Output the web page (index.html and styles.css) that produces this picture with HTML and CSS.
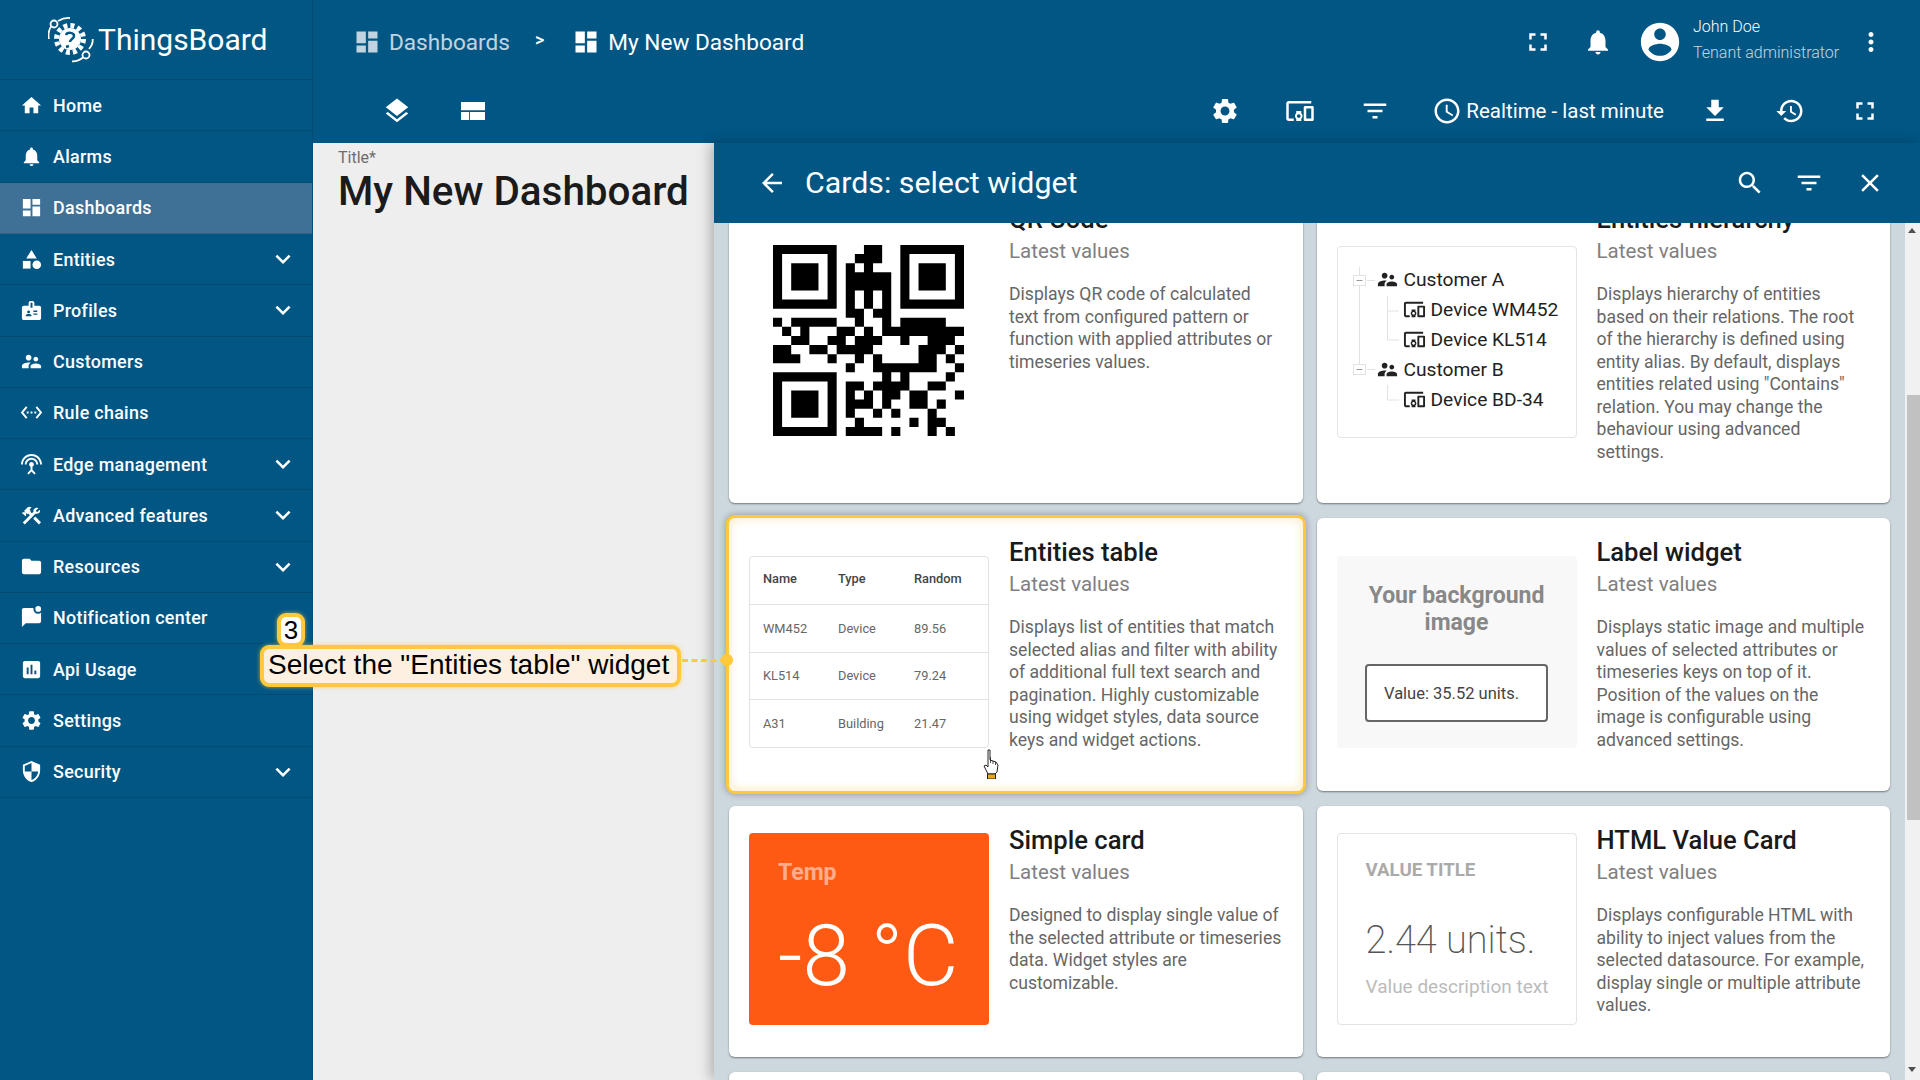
FILE: index.html
```html
<!DOCTYPE html>
<html>
<head>
  <title>ThingsBoard - My New Dashboard</title>
  <meta name="viewport" content="width=device-width, initial-scale=1.0">
  <link rel="stylesheet" href="styles.css">
</head>
<body>
  <svg class="defs" width="0" height="0">
    <symbol id="i-home" viewBox="0 0 24 24"><path d="M10 20v-6h4v6h5v-8h3L12 3 2 12h3v8z"/></symbol>
    <symbol id="i-bell" viewBox="0 0 24 24"><path d="M12 22c1.1 0 2-.9 2-2h-4c0 1.1.89 2 2 2zm6-6v-5c0-3.07-1.64-5.64-4.5-6.32V4c0-.83-.67-1.5-1.5-1.5s-1.5.67-1.5 1.5v.68C7.63 5.36 6 7.92 6 11v5l-2 2v1h16v-1l-2-2z"/></symbol>
    <symbol id="i-dash" viewBox="0 0 24 24"><path d="M3 13h8V3H3v10zm0 8h8v-6H3v6zm10 0h8V11h-8v10zm0-18v6h8V3h-8z"/></symbol>
    <symbol id="i-category" viewBox="0 0 24 24"><path d="M12 2l-5.5 9h11z"/><circle cx="17.5" cy="17.5" r="4.5"/><path d="M3 13.5h8v8H3z"/></symbol>
    <symbol id="i-badge" viewBox="0 0 24 24"><path d="M20 7h-5V4c0-1.1-.9-2-2-2h-2c-1.1 0-2 .9-2 2v3H4c-1.1 0-2 .9-2 2v11c0 1.1.9 2 2 2h16c1.1 0 2-.9 2-2V9c0-1.1-.9-2-2-2zM9 12c.83 0 1.5.67 1.5 1.5S9.83 15 9 15s-1.5-.67-1.5-1.5S8.17 12 9 12zm3 6H6v-.75c0-1 2-1.5 3-1.5s3 .5 3 1.5V18zm1-9h-2V4h2v5zm5 7.5h-4V15h4v1.5zm0-3h-4V12h4v1.5z"/></symbol>
    <symbol id="i-people" viewBox="0 0 24 24"><path d="M16.5 12c1.38 0 2.49-1.12 2.49-2.5S17.88 7 16.5 7C15.12 7 14 8.12 14 9.5s1.12 2.5 2.5 2.5zM9 11c1.66 0 2.99-1.34 2.99-3S10.66 5 9 5C7.34 5 6 6.34 6 8s1.34 3 3 3zm7.5 3c-1.83 0-5.5.92-5.5 2.75V19h11v-2.25c0-1.83-3.67-2.75-5.5-2.75zM9 13c-2.33 0-7 1.17-7 3.5V19h7v-2.25c0-.85.33-2.34 2.37-3.47C10.5 13.1 9.66 13 9 13z"/></symbol>
    <symbol id="i-rule" viewBox="0 0 24 24"><path d="M7.77 6.76L6.23 5.48.82 12l5.41 6.52 1.54-1.28L3.42 12l4.35-5.24zM7 13h2v-2H7v2zm10-2h-2v2h2v-2zm-6 2h2v-2h-2v2zm6.77-7.52l-1.54 1.28L20.58 12l-4.35 5.24 1.54 1.28L23.18 12l-5.41-6.52z"/></symbol>
    <symbol id="i-edge" viewBox="0 0 24 24"><path d="M12 5c-3.87 0-7 3.13-7 7h2c0-2.76 2.24-5 5-5s5 2.24 5 5h2c0-3.87-3.13-7-7-7zm1 9.29c.88-.39 1.5-1.26 1.5-2.29 0-1.38-1.12-2.5-2.5-2.5S9.5 10.62 9.5 12c0 1.02.62 1.9 1.5 2.29v3.3L7.59 21 9 22.41l3-3 3 3L16.41 21 13 17.59v-3.3zM12 1C5.93 1 1 5.93 1 12h2c0-4.97 4.03-9 9-9s9 4.03 9 9h2c0-6.07-4.93-11-11-11z"/></symbol>
    <symbol id="i-tools" viewBox="0 0 24 24"><path d="M13.8 15.3l6 6 2.1-2.2-6-6z"/><path d="M17.5 10.1c-.4 0-.8-.05-1.13-.18L5 21.3l-2.1-2.1 7.4-7.4-1.8-1.8-.7.7-1.45-1.4v2.86l-.7.7-3.55-3.5.7-.7h2.8L4.2 7.25 7.8 3.7c1.17-1.17 3.07-1.17 4.24 0L9.9 5.8l1.4 1.4-.7.7 1.8 1.8 1.8-1.9c-.13-.32-.2-.74-.2-1.12C14 5.75 15.75 4 17.5 4c.6 0 1.1.14 1.6.4l-2.7 2.7 1.5 1.5 2.7-2.7c.27.47.4 1 .4 1.6 0 1.75-1.75 2.6-3.5 2.6z"/></symbol>
    <symbol id="i-folder" viewBox="0 0 24 24"><path d="M10 4H4c-1.1 0-1.99.9-1.99 2L2 18c0 1.1.9 2 2 2h16c1.1 0 2-.9 2-2V8c0-1.1-.9-2-2-2h-8l-2-2z"/></symbol>
    <symbol id="i-chat" viewBox="0 0 24 24"><path d="M22 6.98V16c0 1.1-.9 2-2 2H6l-4 4V4c0-1.1.9-2 2-2h10.1c-.06.32-.1.66-.1 1 0 2.76 2.24 5 5 5 1.13 0 2.16-.39 3-1.02z"/><circle cx="19" cy="3" r="3"/></symbol>
    <symbol id="i-chart" viewBox="0 0 24 24"><path d="M19 3H5c-1.1 0-2 .9-2 2v14c0 1.1.9 2 2 2h14c1.1 0 2-.9 2-2V5c0-1.1-.9-2-2-2zM9 17H7v-7h2v7zm4 0h-2V7h2v10zm4 0h-2v-4h2v4z"/></symbol>
    <symbol id="i-gear" viewBox="0 0 24 24"><path d="M19.14 12.94c.04-.3.06-.61.06-.94 0-.32-.02-.64-.07-.94l2.03-1.58c.18-.14.23-.41.12-.61l-1.92-3.32c-.12-.22-.37-.29-.59-.22l-2.39.96c-.5-.38-1.03-.7-1.62-.94l-.36-2.54c-.04-.24-.24-.41-.48-.41h-3.84c-.24 0-.43.17-.47.41l-.36 2.54c-.59.24-1.13.57-1.62.94l-2.39-.96c-.22-.08-.47 0-.59.22L2.74 8.87c-.12.21-.08.47.12.61l2.03 1.58c-.05.3-.09.63-.09.94s.02.64.07.94l-2.03 1.58c-.18.14-.23.41-.12.61l1.92 3.32c.12.22.37.29.59.22l2.39-.96c.5.38 1.03.7 1.62.94l.36 2.54c.05.24.24.41.48.41h3.84c.24 0 .44-.17.47-.41l.36-2.54c.59-.24 1.13-.56 1.62-.94l2.39.96c.22.08.47 0 .59-.22l1.92-3.32c.12-.22.07-.47-.12-.61l-2.01-1.58zM12 15.6c-1.98 0-3.6-1.62-3.6-3.6s1.62-3.6 3.6-3.6 3.6 1.62 3.6 3.6-1.62 3.6-3.6 3.6z"/></symbol>
    <symbol id="i-shield" viewBox="0 0 24 24"><path d="M12 1L3 5v6c0 5.55 3.84 10.74 9 12 5.16-1.26 9-6.45 9-12V5l-9-4zm0 10.99h7c-.53 4.12-3.28 7.79-7 8.94V12H5V6.3l7-3.11v8.8z"/></symbol>
    <symbol id="i-more" viewBox="0 0 24 24"><path d="M16.59 8.59L12 13.17 7.41 8.59 6 10l6 6 6-6z"/></symbol>
    <symbol id="i-full" viewBox="0 0 24 24"><path d="M7 14H5v5h5v-2H7v-3zm-2-4h2V7h3V5H5v5zm12 7h-3v2h5v-5h-2v3zM14 5v2h3v3h2V5h-5z"/></symbol>
    <symbol id="i-account" viewBox="0 0 24 24"><path d="M12 2C6.48 2 2 6.48 2 12s4.48 10 10 10 10-4.48 10-10S17.52 2 12 2zm0 3c1.66 0 3 1.34 3 3s-1.34 3-3 3-3-1.34-3-3 1.34-3 3-3zm0 14.2c-2.5 0-4.71-1.28-6-3.22.03-1.99 4-3.08 6-3.08 1.99 0 5.97 1.09 6 3.08-1.29 1.94-3.5 3.22-6 3.22z"/></symbol>
    <symbol id="i-vert" viewBox="0 0 24 24"><path d="M12 8c1.1 0 2-.9 2-2s-.9-2-2-2-2 .9-2 2 .9 2 2 2zm0 2c-1.1 0-2 .9-2 2s.9 2 2 2 2-.9 2-2-.9-2-2-2zm0 6c-1.1 0-2 .9-2 2s.9 2 2 2 2-.9 2-2-.9-2-2-2z"/></symbol>
    <symbol id="i-layers" viewBox="0 0 24 24"><path d="M11.99 18.54l-7.37-5.73L3 14.07l9 7 9-7-1.63-1.27-7.38 5.74zM12 16l7.36-5.73L21 9l-9-7-9 7 1.63 1.27L12 16z"/></symbol>
    <symbol id="i-layout" viewBox="0 0 24 24"><path d="M2.4 4.8h19.2v6.6H2.4zM2.4 12.8h6.4v6.4H2.4zM9.5 12.8h12.1v6.4H9.5z"/></symbol>
    <symbol id="i-devices" viewBox="0 0 24 24"><path d="M3 6h18V4H3c-1.1 0-2 .9-2 2v12c0 1.1.9 2 2 2h4v-2H3V6zm10 6H9v1.78c-.61.55-1 1.33-1 2.22s.39 1.67 1 2.22V20h4v-1.78c.61-.55 1-1.34 1-2.22s-.39-1.67-1-2.22V12zm-2 5.5c-.83 0-1.5-.67-1.5-1.5s.67-1.5 1.5-1.5 1.5.67 1.5 1.5-.67 1.5-1.5 1.5zM22 8h-6c-.5 0-1 .5-1 1v10c0 .5.5 1 1 1h6c.5 0 1-.5 1-1V9c0-.5-.5-1-1-1zm-1 10h-4v-8h4v8z"/></symbol>
    <symbol id="i-filter" viewBox="0 0 24 24"><path d="M10 18h4v-2h-4v2zM3 6v2h18V6H3zm3 7h12v-2H6v2z"/></symbol>
    <symbol id="i-clock" viewBox="0 0 24 24"><path d="M11.99 2C6.47 2 2 6.48 2 12s4.47 10 9.99 10C17.52 22 22 17.52 22 12S17.52 2 11.99 2zM12 20c-4.42 0-8-3.58-8-8s3.58-8 8-8 8 3.58 8 8-3.58 8-8 8zm.5-13H11v6l5.25 3.15.75-1.23-4.5-2.67z"/></symbol>
    <symbol id="i-download" viewBox="0 0 24 24"><path d="M19 9h-4V3H9v6H5l7 7 7-7zM5 18v2h14v-2H5z"/></symbol>
    <symbol id="i-history" viewBox="0 0 24 24"><path d="M13 3c-4.97 0-9 4.03-9 9H1l3.89 3.89.07.14L9 12H6c0-3.87 3.13-7 7-7s7 3.13 7 7-3.13 7-7 7c-1.93 0-3.68-.79-4.94-2.06l-1.42 1.42C8.27 19.99 10.51 21 13 21c4.97 0 9-4.03 9-9s-4.03-9-9-9zm-1 5v5l4.28 2.54.72-1.21-3.5-2.08V8H12z"/></symbol>
    <symbol id="i-back" viewBox="0 0 24 24"><path d="M20 11H7.83l5.59-5.59L12 4l-8 8 8 8 1.41-1.41L7.83 13H20v-2z"/></symbol>
    <symbol id="i-search" viewBox="0 0 24 24"><path d="M15.5 14h-.79l-.28-.27C15.41 12.59 16 11.11 16 9.5 16 5.91 13.09 3 9.5 3S3 5.91 3 9.5 5.91 16 9.5 16c1.61 0 3.09-.59 4.23-1.57l.27.28v.79l5 4.99L20.49 19l-4.99-5zm-6 0C7.01 14 5 11.99 5 9.5S7.01 5 9.5 5 14 7.01 14 9.5 11.99 14 9.5 14z"/></symbol>
    <symbol id="i-close" viewBox="0 0 24 24"><path d="M19 6.41L17.59 5 12 10.59 6.41 5 5 6.41 10.59 12 5 17.59 6.41 19 12 13.41 17.59 19 19 17.59 13.41 12z"/></symbol>
  </svg>

  <aside class="sidebar">
    <div class="logo">
      <svg class="logo-mark" viewBox="0 0 46 46" width="46" height="46">
        <circle cx="22" cy="22" r="11" fill="#fff"/>
        <circle cx="22" cy="22" r="13.5" fill="none" stroke="#fff" stroke-width="5" stroke-dasharray="4 3.07"/>
        <path d="M18 18c1-3 8-3 8 1 0 3-4 3-4 6M21 29l-3 1" fill="none" stroke="#015684" stroke-width="2.5"/>
        <path d="M.8 22C0 16 1 12 3.5 9M10 4C14 1.5 18 .8 22 1M44.7 22c.3 4-1 7-3.7 10M35 40.5C32 43 28 44.5 24 44.3" fill="none" stroke="#fff" stroke-width="1.8"/>
        <circle cx="6" cy="7" r="3.5" fill="#015684" stroke="#fff" stroke-width="1.8"/>
        <circle cx="38" cy="38" r="3.5" fill="#015684" stroke="#fff" stroke-width="1.8"/>
      </svg>
      <span class="logo-text">ThingsBoard</span>
    </div>
    <nav>
      <a class="nav-item"><svg class="ic"><use href="#i-home"/></svg><span>Home</span></a>
      <a class="nav-item"><svg class="ic"><use href="#i-bell"/></svg><span>Alarms</span></a>
      <a class="nav-item active"><svg class="ic"><use href="#i-dash"/></svg><span>Dashboards</span></a>
      <a class="nav-item"><svg class="ic"><use href="#i-category"/></svg><span>Entities</span><svg class="chev"><use href="#i-more"/></svg></a>
      <a class="nav-item"><svg class="ic"><use href="#i-badge"/></svg><span>Profiles</span><svg class="chev"><use href="#i-more"/></svg></a>
      <a class="nav-item"><svg class="ic"><use href="#i-people"/></svg><span>Customers</span></a>
      <a class="nav-item"><svg class="ic"><use href="#i-rule"/></svg><span>Rule chains</span></a>
      <a class="nav-item"><svg class="ic"><use href="#i-edge"/></svg><span>Edge management</span><svg class="chev"><use href="#i-more"/></svg></a>
      <a class="nav-item"><svg class="ic"><use href="#i-tools"/></svg><span>Advanced features</span><svg class="chev"><use href="#i-more"/></svg></a>
      <a class="nav-item"><svg class="ic"><use href="#i-folder"/></svg><span>Resources</span><svg class="chev"><use href="#i-more"/></svg></a>
      <a class="nav-item"><svg class="ic"><use href="#i-chat"/></svg><span>Notification center</span></a>
      <a class="nav-item"><svg class="ic"><use href="#i-chart"/></svg><span>Api Usage</span></a>
      <a class="nav-item"><svg class="ic"><use href="#i-gear"/></svg><span>Settings</span></a>
      <a class="nav-item"><svg class="ic"><use href="#i-shield"/></svg><span>Security</span><svg class="chev"><use href="#i-more"/></svg></a>
    </nav>
  </aside>

  <main class="main">
    <header class="topbar">
      <div class="crumbs">
        <svg class="crumb-ic dim"><use href="#i-dash"/></svg>
        <span class="crumb dim">Dashboards</span>
        <span class="crumb-sep">&gt;</span>
        <svg class="crumb-ic"><use href="#i-dash"/></svg>
        <span class="crumb">My New Dashboard</span>
        <div class="spacer"></div>
        <svg class="tb-ic full-top"><use href="#i-full"/></svg>
        <svg class="tb-ic bell-top"><use href="#i-bell"/></svg>
        <svg class="avatar"><use href="#i-account"/></svg>
        <div class="user">
          <div class="user-name">John Doe</div>
          <div class="user-role">Tenant administrator</div>
        </div>
        <svg class="tb-ic kebab"><use href="#i-vert"/></svg>
      </div>
      <div class="toolbar">
        <svg class="tb-ic layers"><use href="#i-layers"/></svg>
        <svg class="tb-ic layout"><use href="#i-layout"/></svg>
        <div class="spacer"></div>
        <svg class="tb-ic"><use href="#i-gear"/></svg>
        <svg class="tb-ic"><use href="#i-devices"/></svg>
        <svg class="tb-ic"><use href="#i-filter"/></svg>
        <div class="timewindow"><svg class="tb-ic"><use href="#i-clock"/></svg><span>Realtime - last minute</span></div>
        <svg class="tb-ic"><use href="#i-download"/></svg>
        <svg class="tb-ic"><use href="#i-history"/></svg>
        <svg class="tb-ic"><use href="#i-full"/></svg>
      </div>
    </header>

    <div class="content">
      <section class="dash">
        <div class="dash-label">Title*</div>
        <div class="dash-title">My New Dashboard</div>
      </section>

      <section class="panel">
        <div class="panel-head">
          <svg class="tb-ic"><use href="#i-back"/></svg>
          <span class="panel-title">Cards: select widget</span>
          <div class="spacer"></div>
          <svg class="tb-ic"><use href="#i-search"/></svg>
          <svg class="tb-ic"><use href="#i-filter"/></svg>
          <svg class="tb-ic"><use href="#i-close"/></svg>
        </div>
        <div class="panel-body">
          <div class="scroller">
            <div class="cards">

              <article class="card">
                <div class="thumb thumb-qr">
                  <svg viewBox="0 0 21 21" width="191" height="191"><path d="M0 0h7v7H0zM1 1v5h5V1zM2 2h3v3H2zM14 0h7v7h-7zM15 1v5h5V1zM16 2h3v3h-3zM0 14h7v7H0zM1 15v5h5v-5zM2 16h3v3H2z" fill-rule="evenodd"/><path d="M10 0h2v1h-2zM9 1h3v1H9zM8 2h1v1H8zM10 2h1v1h-1zM8 3h5v2H8zM8 5h1v2H8zM10 5h1v2h-1zM12 5h1v2h-1zM8 7h2v1H8zM11 7h2v1h-2zM0 8h1v1H0zM2 8h5v1H2zM9 8h1v1H9zM12 8h1v1h-1zM14 8h5v1h-5zM1 9h1v1H1zM3 9h1v1H3zM7 9h2v1H7zM10 9h1v1h-1zM12 9h9v1h-9zM2 10h2v1H2zM6 10h2v1H6zM9 10h3v1H9zM14 10h1v1h-1zM17 10h3v1h-3zM0 11h2v1H0zM4 11h2v1H4zM7 11h4v1H7zM16 11h3v1h-3zM20 11h1v1h-1zM0 12h3v1H0zM6 12h1v1H6zM9 12h1v1H9zM11 12h1v1h-1zM16 12h2v1h-2zM19 12h1v1h-1zM8 13h1v1H8zM11 13h7v1h-7zM20 13h1v1h-1zM12 14h1v1h-1zM14 14h1v1h-1zM19 14h1v1h-1zM8 15h2v1H8zM11 15h4v1h-4zM17 15h2v1h-2zM8 16h1v1H8zM10 16h1v1h-1zM12 16h2v1h-2zM15 16h2v1h-2zM20 16h1v1h-1zM8 17h3v1H8zM12 17h1v1h-1zM15 17h2v1h-2zM18 17h1v1h-1zM8 18h1v1H8zM11 18h1v1h-1zM13 18h1v1h-1zM17 18h1v1h-1zM9 19h1v1H9zM15 19h1v1h-1zM17 19h2v1h-2zM8 20h4v1H8zM13 20h1v1h-1zM17 20h1v1h-1zM19 20h1v1h-1z"/></svg>
                </div>
                <div class="info">
                  <h3>QR Code</h3>
                  <div class="kind">Latest values</div>
                  <p>Displays QR code of calculated text from configured pattern or function with applied attributes or timeseries values.</p>
                </div>
              </article>

              <article class="card">
                <div class="thumb thumb-tree">
                  <svg class="tree-lines" width="238" height="190" stroke="#e2e2e2">
                    <path d="M21.5 20V123M37 33.5H29M37 122.5H29M49.5 49V64H61M49.5 64V93H61M49.5 138V153H61"/>
                    <rect x="15.5" y="28.5" width="12" height="10" fill="#fff"/>
                    <rect x="15.5" y="117.5" width="12" height="10" fill="#fff"/>
                    <path d="M18.5 33.5h6M18.5 122.5h6" stroke="#999"/>
                  </svg>
                  <div class="tree-row tree-root"><svg class="tree-ic"><use href="#i-people"/></svg>Customer A</div>
                  <div class="tree-row tree-leaf"><svg class="tree-ic"><use href="#i-devices"/></svg>Device WM452</div>
                  <div class="tree-row tree-leaf"><svg class="tree-ic"><use href="#i-devices"/></svg>Device KL514</div>
                  <div class="tree-row tree-root"><svg class="tree-ic"><use href="#i-people"/></svg>Customer B</div>
                  <div class="tree-row tree-leaf"><svg class="tree-ic"><use href="#i-devices"/></svg>Device BD-34</div>
                </div>
                <div class="info">
                  <h3>Entities hierarchy</h3>
                  <div class="kind">Latest values</div>
                  <p>Displays hierarchy of entities based on their relations. The root of the hierarchy is defined using entity alias. By default, displays entities related using "Contains" relation. You may change the behaviour using advanced settings.</p>
                </div>
              </article>

              <article class="card selected">
                <div class="thumb thumb-table">
                  <div class="t-row t-head"><span>Name</span><span>Type</span><span>Random</span></div>
                  <div class="t-row"><span>WM452</span><span>Device</span><span>89.56</span></div>
                  <div class="t-row"><span>KL514</span><span>Device</span><span>79.24</span></div>
                  <div class="t-row"><span>A31</span><span>Building</span><span>21.47</span></div>
                </div>
                <div class="info">
                  <h3>Entities table</h3>
                  <div class="kind">Latest values</div>
                  <p>Displays list of entities that match selected alias and filter with ability of additional full text search and pagination. Highly customizable using widget styles, data source keys and widget actions.</p>
                </div>
              </article>

              <article class="card">
                <div class="thumb thumb-label">
                  <div class="label-bg">Your background image</div>
                  <div class="label-val">Value: 35.52 units.</div>
                </div>
                <div class="info">
                  <h3>Label widget</h3>
                  <div class="kind">Latest values</div>
                  <p>Displays static image and multiple values of selected attributes or timeseries keys on top of it. Position of the values on the image is configurable using advanced settings.</p>
                </div>
              </article>

              <article class="card">
                <div class="thumb thumb-simple">
                  <div class="simple-name">Temp</div>
                  <div class="simple-val">-8 °C</div>
                </div>
                <div class="info">
                  <h3>Simple card</h3>
                  <div class="kind">Latest values</div>
                  <p>Designed to display single value of the selected attribute or timeseries data. Widget styles are customizable.</p>
                </div>
              </article>

              <article class="card">
                <div class="thumb thumb-html">
                  <div class="html-title">VALUE TITLE</div>
                  <div class="html-val">2.44 units.</div>
                  <div class="html-desc">Value description text</div>
                </div>
                <div class="info">
                  <h3>HTML Value Card</h3>
                  <div class="kind">Latest values</div>
                  <p>Displays configurable HTML with ability to inject values from the selected datasource. For example, display single or multiple attribute values.</p>
                </div>
              </article>

              <article class="card stub"></article>
              <article class="card stub"></article>
            </div>
          </div>
          <div class="scrollbar">
            <div class="sb-up"></div>
            <div class="sb-thumb"></div>
            <div class="sb-down"></div>
          </div>
        </div>
      </section>
    </div>
  </main>

  <!-- tutorial callout, sits over the page -->
  <div class="step-num">3</div>
  <div class="step-text">Select the "Entities table" widget</div>
  <div class="step-dash"></div>
  <div class="step-dot"></div>
  <svg class="cursor" viewBox="0 0 16 30" width="18" height="30">
    <path d="M5 1h2v10l6 2 2 3-1 7-2 2H5l-4-8 2-1 2 2z" fill="#fff" stroke="#222" stroke-width="1"/>
    <path d="M7.5 8v6M10 12v3M12.5 13v3" stroke="#222" stroke-width=".8"/>
    <rect x="4.5" y="25" width="8" height="5" fill="#e9a90f" stroke="#222"/>
  </svg>
</body>
</html>
```
FILE: styles.css
```css
* {
  box-sizing: border-box;
}

html, body {
  margin: 0;
  height: 1080px;
  overflow: hidden;
}

body {
  display: flex;
  position: relative;
  font-family: Roboto, "Liberation Sans", sans-serif;
  background-color: #015684;
  color: #fff;
}

.defs {
  position: absolute;
}

svg {
  fill: currentColor;
  flex: none;
}

.spacer {
  flex: 1;
}

/* sidebar */
.sidebar {
  width: 313px;
  flex: none;
  border-right: 1px solid rgba(0, 0, 0, 0.1);
}

.logo {
  height: 80.2px;
  padding-left: 48px;
  display: flex;
  align-items: center;
  gap: 4px;
  border-bottom: 1px solid rgba(0, 0, 0, 0.12);
}

.logo-text {
  font-size: 30px;
  line-height: 1;
}

.nav-item {
  height: 51.28px;
  padding: 0 14px 0 20px;
  display: flex;
  align-items: center;
  font-size: 17.9px;
  font-weight: 500;
  letter-spacing: 0.3px;
  border-bottom: 1px solid rgba(0, 0, 0, 0.12);
}

.nav-item.active {
  background-color: #3f7096;
}

.nav-item span {
  flex: 1;
  margin-left: 10px;
}

.ic {
  width: 23px;
  height: 23px;
}

.chev {
  width: 30px;
  height: 30px;
}

/* top bars */
.main {
  flex: 1;
  min-width: 0;
  display: flex;
  flex-direction: column;
}

.topbar {
  height: 143px;
  flex: none;
}

.crumbs {
  height: 84px;
  padding: 0 34px 0 40px;
  display: flex;
  align-items: center;
}

.crumb-ic {
  width: 28px;
  height: 28px;
  margin-right: 8px;
}

.crumb {
  font-size: 22.6px;
}

.dim {
  opacity: 0.75;
}

.crumb-sep {
  margin: -6px 28px 0 25px;
  font-size: 18px;
  font-weight: 500;
}

.tb-ic {
  width: 30px;
  height: 30px;
}

.full-top {
  margin-right: 30px;
}

.avatar {
  width: 46px;
  height: 46px;
  margin-left: 24px;
}

.user {
  width: 163px;
  margin: -4px 0 0 10px;
  font-size: 16px;
  font-weight: 300;
}

.user-name {
  line-height: 24px;
  margin-bottom: 2px;
}

.user-role {
  line-height: 24px;
  opacity: 0.75;
}

.toolbar {
  height: 60px;
  padding: 0 40px 0 69px;
  display: flex;
  align-items: center;
  gap: 45px;
  margin-top: -3px;
}

.layers {
  margin-right: 1px;
}

.timewindow {
  display: flex;
  align-items: center;
  gap: 4px;
  font-size: 20.5px;
  margin: 0 -9px 0 -3px;
}

/* left dashboard area */
.content {
  flex: 1;
  min-height: 0;
  display: flex;
}

.dash {
  width: 401px;
  flex: none;
  padding: 6px 0 0 25px;
  background-color: #eeeeee;
}

.dash-label {
  font-size: 16px;
  line-height: 17px;
  color: #6d6d6d;
}

.dash-title {
  font-size: 40.4px;
  font-weight: 500;
  line-height: 51px;
  color: #1b1b1b;
}

/* right panel */
.panel {
  flex: 1;
  min-width: 0;
  display: flex;
  flex-direction: column;
  box-shadow: -4px 0 12px rgba(0, 0, 0, 0.25);
}

.panel-head {
  height: 80px;
  flex: none;
  padding: 0 35px 0 43px;
  display: flex;
  align-items: center;
  gap: 31px;
}

.panel-title {
  font-size: 30.3px;
  margin: 0 0 2px -13px;
}

.panel-title + .spacer + .tb-ic {
  margin-right: -2px;
}

.panel-body {
  flex: 1;
  min-height: 0;
  display: flex;
  background-color: #cdd8de;
}

.scroller {
  flex: 1;
  min-width: 0;
  overflow: hidden;
}

.cards {
  margin-top: -38px;
  padding: 0 15px;
  display: grid;
  grid-template-columns: 1fr 1fr;
  gap: 15px 14px;
}

.scrollbar {
  width: 15px;
  flex: none;
  background-color: #f1f1f1;
  display: flex;
  flex-direction: column;
  align-items: flex-end;
}

.sb-up,
.sb-down {
  width: 0;
  height: 0;
  margin: 5px 4px 0 0;
  border-left: 4px solid transparent;
  border-right: 4px solid transparent;
}

.sb-up {
  border-bottom: 5px solid #505050;
}

.sb-down {
  margin-top: 247px;
  border-top: 5px solid #505050;
}

.sb-thumb {
  width: 13px;
  height: 425px;
  margin-top: 162px;
  background-color: #c1c1c1;
}

/* widget cards */
.card {
  background-color: #fff;
  border-radius: 6px;
  box-shadow: 0 1px 2px rgba(0, 0, 0, 0.45);
  display: flex;
  align-items: center;
  padding-left: 20px;
  color: #000;
}

.card.selected {
  box-shadow: 0 0 0 3px #ffc83d, 0 0 6px 4px rgba(0, 0, 0, 0.25), inset 0 0 9px 2px #fdeccd;
}

.card.stub {
  height: 120px;
}

.thumb {
  width: 240px;
  height: 192px;
  flex: none;
  margin-bottom: 5px;
  border-radius: 4px;
  position: relative;
}

.info {
  flex: 1;
  align-self: stretch;
  margin-left: 20px;
  padding: 18px 15px 40px 0;
  min-width: 0;
}

.info h3 {
  margin: 0;
  font-size: 25.6px;
  font-weight: 500;
  line-height: 32px;
  color: #1a1a1a;
}

.kind {
  margin-top: 4px;
  font-size: 20.5px;
  line-height: 24px;
  color: #808080;
}

.info p {
  max-width: 273.5px;
  margin: 20px 0 0;
  font-size: 17.6px;
  line-height: 22.5px;
  color: #666;
}

.thumb-qr {
  display: flex;
  justify-content: center;
  align-items: flex-start;
  color: #000;
}

.thumb-qr svg {
  margin: -1px 2px 0 0;
}

.thumb-tree {
  border: 1px solid #e4e4e4;
  padding-top: 18px;
}

.tree-lines {
  position: absolute;
  left: 0;
  top: 0;
  fill: none;
}

.tree-row {
  height: 30px;
  display: flex;
  align-items: center;
  gap: 5px;
  font-size: 19.2px;
  color: #222;
  position: relative;
}

.tree-root {
  padding-left: 38px;
}

.tree-leaf {
  padding-left: 65px;
}

.tree-ic {
  width: 23px;
  height: 23px;
}

.thumb-table {
  border: 1px solid #e2e2e2;
  font-size: 12.8px;
  color: #666;
  display: flex;
  flex-direction: column;
}

.t-row {
  flex: 1;
  display: grid;
  grid-template-columns: 75px 76px 1fr;
  align-items: center;
  padding-left: 13px;
  border-bottom: 1px solid #e2e2e2;
}

.t-row:last-child {
  border-bottom: none;
}

.t-head {
  font-weight: 500;
  color: #444;
}

.t-head span {
  margin-bottom: 3px;
}

.thumb-label {
  background-color: #f8f8f8;
  padding-top: 26px;
  text-align: center;
}

.label-bg {
  padding: 0 20px;
  font-size: 23px;
  font-weight: 700;
  line-height: 27px;
  color: #888;
}

.label-val {
  width: 183px;
  height: 58px;
  margin: 28px auto 0;
  padding-left: 17px;
  display: flex;
  align-items: center;
  background-color: #fff;
  border: 2px solid #666;
  border-radius: 4px;
  font-size: 16.5px;
  color: #444;
}

.thumb-simple {
  background-color: #ff5a14;
  padding: 26px 0 0 29px;
  color: #fff;
}

.simple-name {
  font-size: 23px;
  font-weight: 700;
  opacity: 0.5;
}

.simple-val {
  margin-top: 20px;
  font-size: 85.5px;
  font-weight: 300;
  line-height: 100px;
  white-space: nowrap;
}

.thumb-html {
  border: 1px solid #e4e4e4;
  padding: 24px 0 0 28px;
}

.html-title {
  font-size: 18.7px;
  font-weight: 700;
  line-height: 24px;
  color: #aaa;
}

.html-val {
  margin-top: 34px;
  font-size: 38px;
  font-weight: 200;
  line-height: 48px;
  color: #555;
}

.html-desc {
  margin-top: 11px;
  font-size: 19px;
  line-height: 24px;
  color: #bbb;
}

/* tutorial overlay */
.step-num,
.step-text {
  position: absolute;
  background-color: #fdf0e0;
  border: 4px solid #ffc83d;
  border-radius: 9px;
  color: #000;
  font-family: "Liberation Sans", Arial, sans-serif;
  box-shadow: 0 0 4px rgba(255, 200, 61, 0.7);
}

.step-num {
  left: 277px;
  top: 613px;
  width: 28px;
  height: 34px;
  background-color: #fff;
  font-size: 26px;
  line-height: 26px;
  text-align: center;
}

.step-text {
  left: 260px;
  top: 645px;
  width: 421px;
  height: 42px;
  padding-left: 4px;
  font-size: 28px;
  line-height: 31px;
  white-space: nowrap;
}

.step-dash {
  position: absolute;
  left: 682px;
  top: 659px;
  width: 44px;
  border-top: 3px dashed #ffc83d;
}

.step-dot {
  position: absolute;
  left: 721px;
  top: 654px;
  width: 12px;
  height: 12px;
  border-radius: 50%;
  background-color: #ffc83d;
}

.cursor {
  position: absolute;
  left: 982px;
  top: 749px;
}
```
